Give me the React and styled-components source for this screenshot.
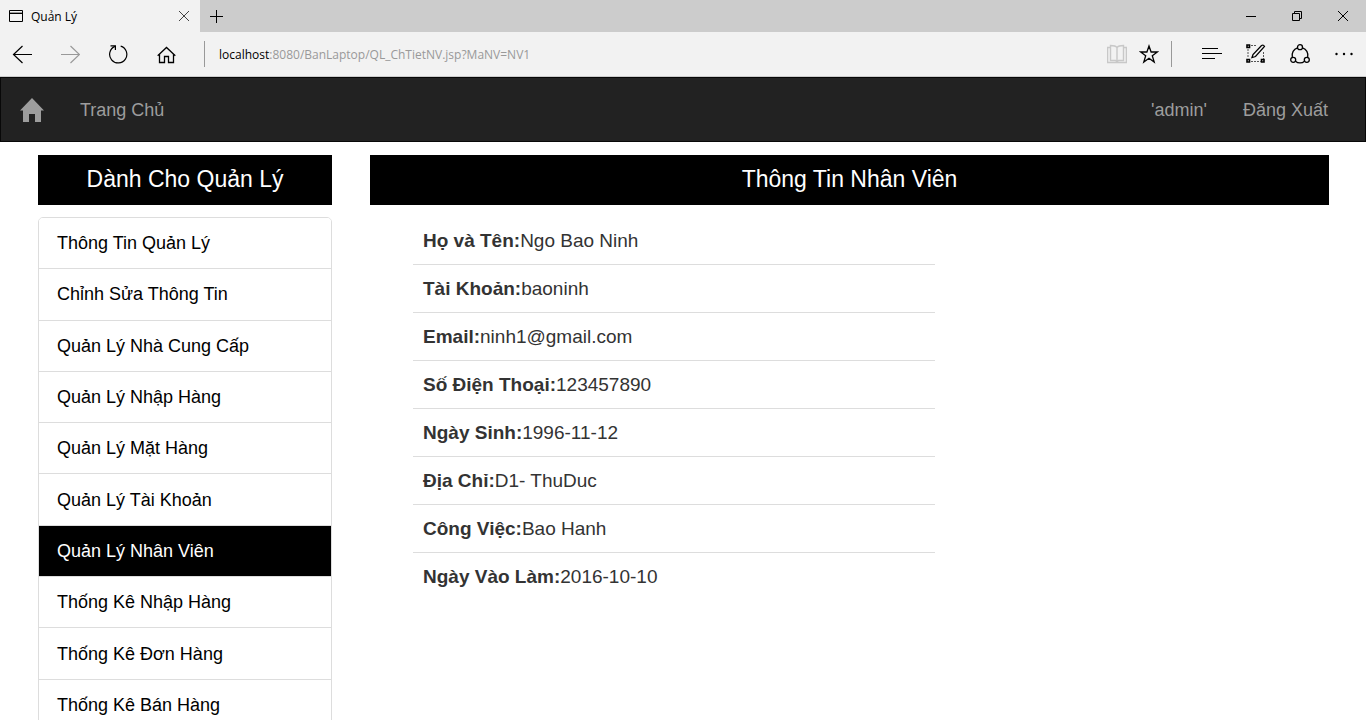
import React from 'react';
import styled, { createGlobalStyle } from 'styled-components';

const GlobalStyle = createGlobalStyle`
  *, *::before, *::after { box-sizing: border-box; }
  body {
    margin: 0;
    background: #fff;
    color: #333;
    font-family: 'Liberation Sans', Arial, sans-serif;
  }
  button { font: inherit; color: inherit; }
`;

const Browser = styled.div`
  display: flex;
  flex-direction: column;
  height: 100vh;
  padding-right: 4px;
  overflow: hidden;
`;

const Chrome = styled.header`
  flex: none;
  color: #000;
  font-family: 'Open Sans', 'Noto Sans', sans-serif;
  font-size: 12px;
`;

const TitleBar = styled.div`
  display: flex;
  height: 32px;
  background: #ccc;
`;

const Tab = styled.div`
  display: flex;
  align-items: center;
  gap: 7px;
  width: 200px;
  padding: 0 3px 0 8px;
  background: #f2f2f2;
`;

const TabTitle = styled.span`
  flex: 1;
`;

const IconButton = styled.button`
  display: flex;
  align-items: center;
  justify-content: center;
  width: ${(p) => p.$width || 44}px;
  height: 100%;
  padding: 0;
  border: 0;
  background: none;
  color: ${(p) => p.$color || '#000'};
`;

const WindowControls = styled.div`
  display: flex;
  margin-left: auto;
`;

const Toolbar = styled.div`
  display: flex;
  align-items: center;
  height: 45px;
  background: #f2f2f2;
  border-bottom: 1px solid #ccc;
`;

const ButtonGroup = styled.div`
  display: flex;
  gap: ${(p) => p.$gap || 0}px;
  height: 100%;
`;

const Separator = styled.span`
  width: 1px;
  height: 26px;
  margin: 0 ${(p) => p.$after}px 0 ${(p) => p.$before}px;
  background: #999;
`;

const Address = styled.button`
  flex: 1;
  height: 100%;
  padding: 0;
  border: 0;
  background: none;
  text-align: left;
  color: #999;
  cursor: text;

  strong {
    font-weight: 400;
    color: #000;
  }
`;

const Page = styled.div`
  flex: 1;
  min-height: 0;
  overflow: hidden;
`;

const NavBar = styled.nav`
  display: flex;
  align-items: center;
  gap: 36px;
  height: 65px;
  padding: 0 37px 0 19px;
  background: #222;
  border: 1px solid #080808;
`;

const NavLink = styled.a`
  display: flex;
  color: #9d9d9d;
  font-size: 18px;
  line-height: 24px;
  text-decoration: none;
  margin-left: ${(p) => (p.$push ? 'auto' : 0)};
`;

const Columns = styled.div`
  display: grid;
  grid-template-columns: 294fr 959fr;
  gap: 38px;
  padding: 13px 37px 0 38px;
`;

const Heading = styled.h1`
  margin: 0 0 12px;
  padding: 10px 0 12px;
  background: #000;
  color: #fff;
  font-size: 23px;
  font-weight: 400;
  line-height: 28px;
  text-align: center;
`;

const Menu = styled.ul`
  display: flex;
  flex-direction: column;
  min-height: 514px;
  margin: 0;
  padding: 0;
  list-style: none;
  border: 1px solid #ddd;
  border-radius: 5px;
  overflow: hidden;
`;

const MenuItem = styled.li`
  flex: 1;
  display: flex;

  & + & { border-top: 1px solid #ddd; }
`;

const MenuLink = styled.a`
  flex: 1;
  display: flex;
  align-items: center;
  padding: 0 18px;
  background: ${(p) => (p.$active ? '#000' : '#fff')};
  color: ${(p) => (p.$active ? '#fff' : '#000')};
  font-size: 18px;
  line-height: 24px;
  text-decoration: none;
`;

const Details = styled.dl`
  max-width: 522px;
  margin: 0 0 0 43px;
`;

const DetailRow = styled.div`
  display: flex;
  padding: 12px 10px 11px;
  font-size: 19px;
  line-height: 24px;

  & + & { border-top: 1px solid #ddd; }
`;

const Term = styled.dt`
  font-weight: 700;
`;

const Value = styled.dd`
  margin: 0;
`;

const Icon = ({ w = 20, h = 20, stroke = 1, children }) => (
  <svg width={w} height={h} viewBox={`0 0 ${w} ${h}`} fill="none" stroke="currentColor" strokeWidth={stroke} aria-hidden="true">
    {children}
  </svg>
);

const menu = [
  'Thông Tin Quản Lý',
  'Chỉnh Sửa Thông Tin',
  'Quản Lý Nhà Cung Cấp',
  'Quản Lý Nhập Hàng',
  'Quản Lý Mặt Hàng',
  'Quản Lý Tài Khoản',
  'Quản Lý Nhân Viên',
  'Thống Kê Nhập Hàng',
  'Thống Kê Đơn Hàng',
  'Thống Kê Bán Hàng',
];
const activeItem = 'Quản Lý Nhân Viên';

const details = [
  ['Họ và Tên:', 'Ngo Bao Ninh'],
  ['Tài Khoản:', 'baoninh'],
  ['Email:', 'ninh1@gmail.com'],
  ['Số Điện Thoại:', '123457890'],
  ['Ngày Sinh:', '1996-11-12'],
  ['Địa Chỉ:', 'D1- ThuDuc'],
  ['Công Việc:', 'Bao Hanh'],
  ['Ngày Vào Làm:', '2016-10-10'],
];

function BrowserChrome() {
  return (
    <Chrome>
      <TitleBar>
        <Tab>
          <Icon w={16} h={16}>
            <path d="M1.5 2.5H14.5V13.5H1.5Z" />
            <path d="M2 4.5H14" stroke="#999" />
            <path d="M2 5.5H14" />
          </Icon>
          <TabTitle>Quản Lý</TabTitle>
          <IconButton $width={26} $color="#444" aria-label="Close tab">
            <Icon w={12} h={12}><path d="M1 1L11 11M11 1L1 11" /></Icon>
          </IconButton>
        </Tab>
        <IconButton $width={33} aria-label="New tab">
          <Icon w={13} h={13}><path d="M0 6.5H13M6.5 0V13" /></Icon>
        </IconButton>
        <WindowControls>
          <IconButton $width={46} aria-label="Minimize">
            <Icon w={10} h={10}><path d="M0 5.5H10" /></Icon>
          </IconButton>
          <IconButton $width={46} aria-label="Restore">
            <Icon w={10} h={10}><path d="M.5 2.5H7.5V9.5H.5ZM2.5 2.5V.5H9.5V7.5H7.5" /></Icon>
          </IconButton>
          <IconButton $width={46} aria-label="Close">
            <Icon w={10} h={10}><path d="M0 0L10 10M10 0L0 10" /></Icon>
          </IconButton>
        </WindowControls>
      </TitleBar>
      <Toolbar>
        <ButtonGroup $gap={4}>
          <IconButton aria-label="Back">
            <Icon stroke={1.2}><path d="M20 10.5H1.5M10.5 2L1.5 10.5L10.5 19" /></Icon>
          </IconButton>
          <IconButton $color="#999" aria-label="Forward">
            <Icon stroke={1.2}><path d="M1 10.5H19.5M10.5 2L19.5 10.5L10.5 19" /></Icon>
          </IconButton>
          <IconButton aria-label="Refresh">
            <Icon stroke={1.2}>
              <path d="M12.7 2.1A8.6 8.6 0 1 1 6.9 2.4" />
              <path d="M2.5 1.8H7.4V6" />
            </Icon>
          </IconButton>
          <IconButton aria-label="Home">
            <Icon stroke={1.3}>
              <path d="M1.7 11.7L10.5 3.5L19.3 11.7" />
              <path d="M3.5 10.3V18.5H8.5V12.5H12.5V18.5H17.5V10.3" />
            </Icon>
          </IconButton>
        </ButtonGroup>
        <Separator $before={16} $after={14} />
        <Address aria-label="Address">
          <strong>localhost</strong>:8080/BanLaptop/QL_ChTietNV.jsp?MaNV=NV1
        </Address>
        <ButtonGroup>
          <IconButton $width={32} $color="#c8c8c8" aria-label="Reading view">
            <Icon stroke={1.4}>
              <path d="M3.5 3.5H.6V18.5H19.4V3.5H16.5" />
              <path d="M10 3.5C8.5 1.5 6 1.5 3.5 1.5V16.5H8.5L10 18L11.5 16.5H16.5V1.5C14 1.5 11.5 1.5 10 3.5V17" />
            </Icon>
          </IconButton>
          <IconButton $width={32} aria-label="Add to favorites">
            <Icon stroke={1.3}>
              <path d="M10 2L12.1 8H18.4L13.3 11.8L15.2 18L10 14.3L4.8 18L6.7 11.8L1.6 8H7.9Z" />
            </Icon>
          </IconButton>
        </ButtonGroup>
        <Separator $before={6} $after={18} />
        <ButtonGroup>
          <IconButton aria-label="Hub">
            <Icon><path d="M0 4.5H16M0 9.5H20M0 14.5H13" /></Icon>
          </IconButton>
          <IconButton aria-label="Make a web note">
            <Icon>
              <path d="M1 1H3.500V3.500H1ZM1 15.500H3.500V18H1ZM15.500 15.500H18V18H15.500Z" strokeWidth="1.6" />
              <path d="M5 1.5H11M2 5V14M17.5 8V15M5 17.5H15" strokeDasharray="2 1" stroke="#555" />
              <path d="M6 13.5L7 10.5L15.500 1.5Q17.5 .5 18.5 2.5L9.5 12.5Z" strokeWidth="1.3" />
            </Icon>
          </IconButton>
          <IconButton aria-label="Share">
            <Icon stroke={1.3}>
              <circle cx="10" cy="3.2" r="2.5" />
              <circle cx="3.2" cy="15.8" r="2.5" />
              <circle cx="16.8" cy="15.8" r="2.5" />
              <path d="M7.5 3.8C3.5 5 1.5 9 2.3 13.2M12.5 3.8C16.5 5 18.5 9 17.7 13.2M5.5 17.2C8 19.5 12 19.5 14.5 17.2" />
            </Icon>
          </IconButton>
          <IconButton aria-label="More">
            <Icon>
              <g fill="currentColor" stroke="none">
                <circle cx="2.5" cy="10" r="1.2" />
                <circle cx="10" cy="10" r="1.2" />
                <circle cx="17.5" cy="10" r="1.2" />
              </g>
            </Icon>
          </IconButton>
        </ButtonGroup>
      </Toolbar>
    </Chrome>
  );
}

export default function App() {
  return (
    <Browser>
      <GlobalStyle />
      <BrowserChrome />
      <Page>
        <NavBar>
          <NavLink href="#home" aria-label="Home">
            <svg width="24" height="24" viewBox="0 0 24 24" fill="currentColor" aria-hidden="true">
              <path d="M12 0L24 12.5H21V24H15V16H9V24H3V12.5H0Z" />
            </svg>
          </NavLink>
          <NavLink href="#main">Trang Chủ</NavLink>
          <NavLink href="#account" $push>'admin'</NavLink>
          <NavLink href="#logout">Đăng Xuất</NavLink>
        </NavBar>
        <Columns>
          <aside>
            <Heading as="h2">Dành Cho Quản Lý</Heading>
            <Menu>
              {menu.map((label) => (
                <MenuItem key={label}>
                  <MenuLink href="#menu" $active={label === activeItem}>{label}</MenuLink>
                </MenuItem>
              ))}
            </Menu>
          </aside>
          <main>
            <Heading>Thông Tin Nhân Viên</Heading>
            <Details>
              {details.map(([term, value]) => (
                <DetailRow key={term}>
                  <Term>{term}</Term>
                  <Value>{value}</Value>
                </DetailRow>
              ))}
            </Details>
          </main>
        </Columns>
      </Page>
    </Browser>
  );
}
